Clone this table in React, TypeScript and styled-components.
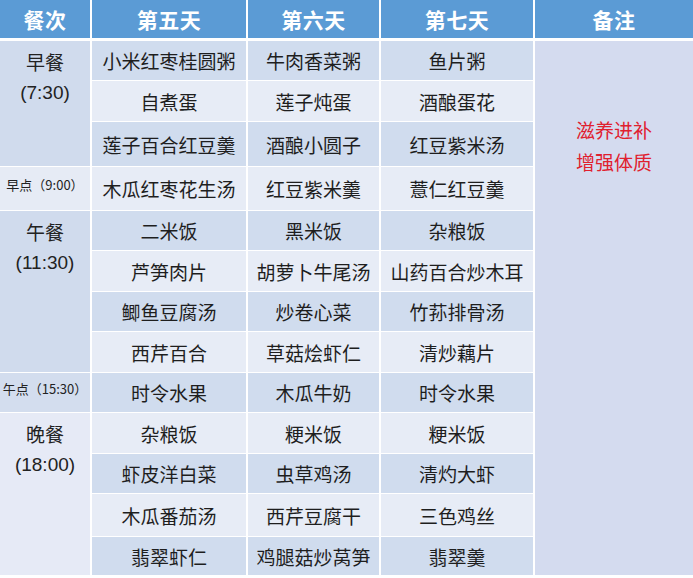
import React from "react";
import styled, { createGlobalStyle } from "styled-components";

const Global = createGlobalStyle`
  html, body { margin: 0; padding: 0; background: #ffffff; }
  body { font-family: "Noto Sans CJK SC", "Noto Sans", sans-serif; }
`;

const COLS = "90px 154px 131px 152px 1fr";

const Page = styled.div`
  width: 693px;
  height: 578px;
  background: #ffffff;
  overflow: hidden;
`;

const HeaderRow = styled.div`
  display: grid;
  grid-template-columns: ${COLS};
  column-gap: 2px;
  height: 38px;
  margin-bottom: 3px;
`;

const HeadCell = styled.div`
  background: #5b9bd5;
  color: #ffffff;
  font-weight: 700;
  font-size: 21px;
  display: flex;
  align-items: center;
  justify-content: center;
  letter-spacing: 0.5px;
`;

const Body = styled.div`
  display: grid;
  grid-template-columns: ${COLS};
  grid-template-rows: 39px 40px 44px 43px 39px 40px 39px 40px 39px 40px 39px 42px 38px;
  gap: 1px 2px;
  border-bottom: 1px solid #ffffff;
`;

const MealCell = styled.div<{ $row: string; $bg: string }>`
  grid-column: 1;
  grid-row: ${(p) => p.$row};
  background: ${(p) => p.$bg};
  color: #222;
  font-size: 19px;
  line-height: 31px;
  text-align: center;
  padding-top: 5px;
  display: flex;
  flex-direction: column;
  align-items: center;
`;

const Time = styled.span`
  font-family: "Liberation Sans", Arial, sans-serif;
  font-size: 19px;
`;

const SnackCell = styled.div<{ $row: string; $bg: string }>`
  grid-column: 1;
  grid-row: ${(p) => p.$row};
  background: ${(p) => p.$bg};
  color: #222;
  font-size: 13px;
  display: flex;
  align-items: center;
  justify-content: center;
  white-space: nowrap;
  padding-bottom: 8px;
  box-sizing: border-box;
`;

const DishCell = styled.div<{ $dark: boolean }>`
  background: ${(p) => (p.$dark ? "#d0dcee" : "#e7ecf6")};
  color: #1e1e1e;
  font-size: 19px;
  display: flex;
  align-items: center;
  justify-content: center;
  white-space: nowrap;
`;

const NoteCell = styled.div`
  grid-column: 5;
  grid-row: 1 / 14;
  background: #d4dbef;
  color: #e0202e;
  font-size: 19px;
  line-height: 32px;
  display: flex;
  flex-direction: column;
  align-items: center;
  padding-top: 73px;
`;

const rows: string[][] = [
  ["小米红枣桂圆粥", "牛肉香菜粥", "鱼片粥"],
  ["自煮蛋", "莲子炖蛋", "酒酿蛋花"],
  ["莲子百合红豆羹", "酒酿小圆子", "红豆紫米汤"],
  ["木瓜红枣花生汤", "红豆紫米羹", "薏仁红豆羹"],
  ["二米饭", "黑米饭", "杂粮饭"],
  ["芦笋肉片", "胡萝卜牛尾汤", "山药百合炒木耳"],
  ["鲫鱼豆腐汤", "炒卷心菜", "竹荪排骨汤"],
  ["西芹百合", "草菇烩虾仁", "清炒藕片"],
  ["时令水果", "木瓜牛奶", "时令水果"],
  ["杂粮饭", "粳米饭", "粳米饭"],
  ["虾皮洋白菜", "虫草鸡汤", "清灼大虾"],
  ["木瓜番茄汤", "西芹豆腐干", "三色鸡丝"],
  ["翡翠虾仁", "鸡腿菇炒莴笋", "翡翠羹"],
];

export default function App() {
  return (
    <Page>
      <Global />
      <HeaderRow>
        {["餐次", "第五天", "第六天", "第七天", "备注"].map((h) => (
          <HeadCell key={h}>{h}</HeadCell>
        ))}
      </HeaderRow>
      <Body>
        <MealCell $row="1 / 4" $bg="#d0dbed">
          <span>早餐</span>
          <Time>(7:30)</Time>
        </MealCell>
        <SnackCell $row="4" $bg="#e6ebf5">早点（9:00）</SnackCell>
        <MealCell $row="5 / 9" $bg="#d0dbed">
          <span>午餐</span>
          <Time>(11:30)</Time>
        </MealCell>
        <SnackCell $row="9" $bg="#d3ddee">午点（15:30）</SnackCell>
        <MealCell $row="10 / 14" $bg="#e6eaf6">
          <span>晚餐</span>
          <Time>(18:00)</Time>
        </MealCell>
        {rows.map((r, i) =>
          r.map((d, j) => (
            <DishCell
              key={`${i}-${j}`}
              $dark={i % 2 === 0}
              style={{ gridRow: i + 1, gridColumn: j + 2 }}
            >
              {d}
            </DishCell>
          ))
        )}
        <NoteCell>
          <span>滋养进补</span>
          <span>增强体质</span>
        </NoteCell>
      </Body>
    </Page>
  );
}
